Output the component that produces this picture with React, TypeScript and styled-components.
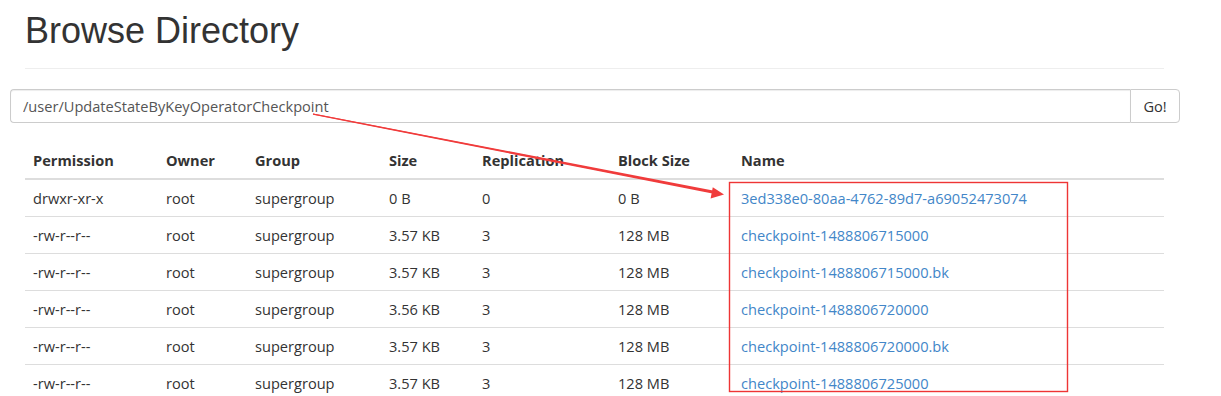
import React from "react";
import styled, { createGlobalStyle } from "styled-components";

const GlobalStyle = createGlobalStyle`
  html, body {
    margin: 0;
    padding: 0;
    background: #fff;
    overflow: hidden;
  }
  body {
    font-family: "Open Sans", "Noto Sans", sans-serif;
    font-size: 14.6px;
    line-height: 20px;
    color: #333;
  }
`;

const rows = [
  { perm: "drwxr-xr-x", size: "0 B", repl: "0", block: "0 B", name: "3ed338e0-80aa-4762-89d7-a69052473074" },
  { perm: "-rw-r--r--", size: "3.57 KB", repl: "3", block: "128 MB", name: "checkpoint-1488806715000" },
  { perm: "-rw-r--r--", size: "3.57 KB", repl: "3", block: "128 MB", name: "checkpoint-1488806715000.bk" },
  { perm: "-rw-r--r--", size: "3.56 KB", repl: "3", block: "128 MB", name: "checkpoint-1488806720000" },
  { perm: "-rw-r--r--", size: "3.57 KB", repl: "3", block: "128 MB", name: "checkpoint-1488806720000.bk" },
  { perm: "-rw-r--r--", size: "3.57 KB", repl: "3", block: "128 MB", name: "checkpoint-1488806725000" },
];

const columns = [
  { label: "Permission", width: 133 },
  { label: "Owner", width: 89 },
  { label: "Group", width: 134 },
  { label: "Size", width: 93 },
  { label: "Replication", width: 136 },
  { label: "Block Size", width: 123 },
  { label: "Name", width: 431 },
];

export default function App() {
  return (
    <Page>
      <GlobalStyle />
      <Header>
        <Title>Browse Directory</Title>
      </Header>
      <SearchGroup>
        <PathInput defaultValue="/user/UpdateStateByKeyOperatorCheckpoint" />
        <GoButton>Go!</GoButton>
      </SearchGroup>
      <Table>
        <colgroup>
          {columns.map((c) => (
            <col key={c.label} width={c.width} />
          ))}
        </colgroup>
        <thead>
          <tr>
            {columns.map((c) => (
              <Th key={c.label}>{c.label}</Th>
            ))}
          </tr>
        </thead>
        <tbody>
          {rows.map((r) => (
            <tr key={r.name}>
              <Td>{r.perm}</Td>
              <Td>root</Td>
              <Td>supergroup</Td>
              <Td>{r.size}</Td>
              <Td>{r.repl}</Td>
              <Td>{r.block}</Td>
              <Td>
                <FileLink href="#">{r.name}</FileLink>
              </Td>
            </tr>
          ))}
        </tbody>
      </Table>
      <Annotation width="1221" height="396" viewBox="0 0 1221 396">
        <rect x="729.5" y="182.5" width="338" height="209" fill="none" stroke="#ee3535" strokeWidth="1.4" />
        <polygon points="313,113.5 713,190.6 712.4,193.6 313,114.7" fill="#f03c3c" />
        <line x1="313" y1="114" x2="712" y2="192" stroke="#f03c3c" strokeWidth="1.2" />
        <polygon points="724,194.5 710.6,198.4 712.8,187.2" fill="#f03c3c" />
      </Annotation>
    </Page>
  );
}

const Page = styled.div`
  position: relative;
  width: 1221px;
  height: 396px;
  padding: 0 57px 0 25px;
  box-sizing: border-box;
`;

const Header = styled.div`
  padding: 11px 0 17px;
  border-bottom: 1px solid #eee;
`;

const Title = styled.h1`
  margin: 0;
  font-family: "Liberation Sans", Arial, sans-serif;
  font-size: 36px;
  font-weight: 400;
  line-height: 40px;
  color: #333;
`;

const SearchGroup = styled.div`
  display: flex;
  margin: 20px -16px 19px -15px;
  height: 34px;
`;

const PathInput = styled.input`
  flex: 1;
  height: 34px;
  box-sizing: border-box;
  padding: 6px 12px;
  border: 1px solid #ccc;
  border-right: none;
  border-radius: 4px 0 0 4px;
  font-family: "Open Sans", "Noto Sans", sans-serif;
  font-size: 14.6px;
  color: #555;
  box-shadow: inset 0 1px 1px rgba(0, 0, 0, 0.075);
  outline: none;
`;

const GoButton = styled.button`
  width: 50px;
  height: 34px;
  box-sizing: border-box;
  border: 1px solid #ccc;
  border-radius: 0 4px 4px 0;
  background: #fff;
  font-family: "Open Sans", "Noto Sans", sans-serif;
  font-size: 14.6px;
  color: #333;
  padding: 0;
`;

const Table = styled.table`
  width: 1139px;
  border-collapse: collapse;
  table-layout: fixed;
`;

const Th = styled.th`
  padding: 8px;
  text-align: left;
  font-weight: 700;
  border-bottom: 2px solid #ddd;
  white-space: nowrap;
`;

const Td = styled.td`
  padding: 8px;
  border-top: 1px solid #ddd;
  white-space: nowrap;
`;

const FileLink = styled.a`
  color: #4286c8;
  text-decoration: none;
`;

const Annotation = styled.svg`
  position: absolute;
  top: 0;
  left: 0;
  pointer-events: none;
`;
